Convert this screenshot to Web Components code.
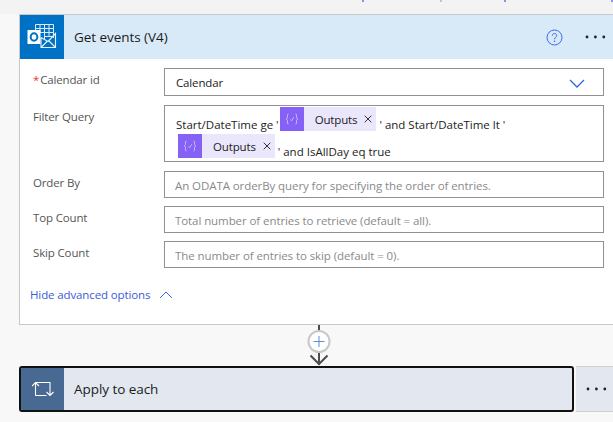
<!DOCTYPE html>
<html><head><meta charset="utf-8"><style>
html,body{margin:0;padding:0;width:613px;height:422px;overflow:hidden;background:#f8f8f8}
body{font-family:"Open Sans","Noto Sans",sans-serif}
</style></head><body>
<flow-canvas>
  <top-strip></top-strip>
  <action-card>
    <field-row label="Calendar id" required kind="select"><span>Calendar</span></field-row>
    <field-row label="Filter Query" kind="tall"><span>Start/DateTime ge '</span><token-chip>Outputs</token-chip><span>' and Start/DateTime lt '</span><token-chip indent>Outputs</token-chip><span>' and IsAllDay eq true</span></field-row>
    <field-row label="Order By" placeholder="An ODATA orderBy query for specifying the order of entries."></field-row>
    <field-row label="Top Count" placeholder="Total number of entries to retrieve (default = all)."></field-row>
    <field-row label="Skip Count" placeholder="The number of entries to skip (default = 0)."></field-row>
  </action-card>
  <flow-connector></flow-connector>
  <loop-bar></loop-bar>
</flow-canvas>
<script>
const F='"Open Sans","Noto Sans",sans-serif';
const dots=`<svg width="24" height="4" viewBox="0 0 24 4"><circle cx="2" cy="2" r="1.4" fill="#222"/><circle cx="10.4" cy="2" r="1.4" fill="#222"/><circle cx="18.8" cy="2" r="1.4" fill="#222"/></svg>`;
customElements.define('flow-canvas',class extends HTMLElement{constructor(){super();this.attachShadow({mode:'open'}).innerHTML=`<style>:host{display:flex;flex-direction:column;width:613px;height:422px;background:#f8f8f8;overflow:hidden}</style><slot></slot>`;}});
customElements.define('top-strip',class extends HTMLElement{constructor(){super();this.attachShadow({mode:'open'}).innerHTML=`<style>:host{display:block;height:14px;background:#f3f3f3}svg{display:block}</style><svg width="613" height="14" viewBox="0 0 613 14"><rect x="362" width="2" height="2" fill="#8f8cf5"/><rect x="440" width="2" height="2" fill="#c4c4c4"/><rect x="504" width="2" height="2" fill="#8f8cf5"/><rect x="611" width="2" height="2" fill="#8f8cf5"/></svg>`;}});
customElements.define('action-card',class extends HTMLElement{constructor(){super();this.attachShadow({mode:'open'}).innerHTML=`<style>
:host{display:block;flex:none;margin-left:19px;width:594px;height:311px;box-sizing:border-box;border:1px solid #c8c8c8;border-right:0;background:#fff;font-family:${F}}
header{display:flex;align-items:center;height:44px;background:#d8e9f8}
.ic{width:44px;height:44px;background:#0072c6;display:flex;align-items:center;justify-content:center}
h2{margin:0 0 0 10px;flex:1;font:400 13.5px/20px ${F};letter-spacing:-.05px;color:#1b1b1b}
.help{margin-right:22px;display:flex}.more{margin-right:4px;display:flex}
.body{display:flex;flex-direction:column;gap:8px;padding:9px 9px 0 0}
.link{display:flex;align-items:center;gap:9px;margin:11px 0 0 10px;color:#3b5bd9;font:400 11.5px/16px ${F};letter-spacing:-.12px}
svg{display:block}
</style><header><div class="ic"><svg width="30" height="30" viewBox="0 0 30 30" fill="none">
<path d="M8.500 9V2.500H26.500V16M8.500 6.500H26.500M8.500 10.500H26.500M17 14.500H26.500M13 2.500V10.500M17.500 2.500V18M22 2.500V15" stroke="#dcebf8" stroke-width="1"/>
<path d="M14 15.500V25.500H28.500V11.500L21 19.500L14 15.500M14 25.500L20 19.500M28.500 25.500L22 19" stroke="#e6f1fa" stroke-width="1.100"/>
<rect x="0.500" y="8" width="13" height="14" fill="#fff"/><ellipse cx="7" cy="15" rx="3.300" ry="3.800" stroke="#0072c6" stroke-width="2"/></svg></div>
<h2>Get events (V4)</h2>
<span class="help"><svg width="17" height="17" viewBox="0 0 17 17" fill="none"><circle cx="8.500" cy="8.500" r="7.500" stroke="#3b68e8" stroke-width="1"/><path d="M6.300 6.700C6.300 5.400 7.300 4.500 8.500 4.500C9.700 4.500 10.700 5.300 10.700 6.500C10.700 8.200 8.500 8.200 8.500 10.300" stroke="#3b68e8"/><circle cx="8.500" cy="12.300" r=".8" fill="#3b68e8"/></svg></span>
<span class="more">${dots}</span></header>
<div class="body"><slot></slot>
<div class="link"><span>Hide advanced options</span><svg width="14" height="8" viewBox="0 0 14 8" fill="none"><path d="M1 7L7 1L13 7" stroke="#3b68e8"/></svg></div></div>`;}});
customElements.define('field-row',class extends HTMLElement{constructor(){super();
const kind=this.getAttribute('kind')||'',req=this.hasAttribute('required'),ph=this.getAttribute('placeholder');
this.attachShadow({mode:'open'}).innerHTML=`<style>
:host{display:grid;grid-template-columns:144px 440px;font-family:${F}}
:host([kind]){margin-bottom:1px}
label{padding:3px 0 0 13px;font:400 11.5px/18px ${F};letter-spacing:-.15px;color:#555}
b{font-weight:400;color:#e33;margin-right:1px}
.box{box-sizing:border-box;border:1px solid #919191;background:#fff;height:27px;display:flex;align-items:center;padding:2px 10px 0;font:400 11.5px/16px ${F};letter-spacing:-.08px;color:#222;justify-content:space-between}
.select{height:28px;padding:2px 18px 0 11px;letter-spacing:-.15px}
.tall{height:57px;display:block;padding:5.500px 10px 0 11px;line-height:0;letter-spacing:0}
.ph{color:#8a8a8a}
svg{display:block}
</style><label>${req?'<b>*</b>':''}${this.getAttribute('label')}</label>
<div class="box ${kind}">${ph?`<span class="ph">${ph}</span>`:'<slot></slot>'}${kind==='select'?'<svg width="16" height="9" viewBox="0 0 16 9" fill="none"><path d="M1 1L8 8L15 1" stroke="#2f66e6" stroke-width="1.300"/></svg>':''}</div>`;}});
customElements.define('token-chip',class extends HTMLElement{constructor(){super();this.attachShadow({mode:'open'}).innerHTML=`<style>
:host{display:inline-flex;align-items:center;height:24px;margin:-4.500px 3px 7.500px 1px;vertical-align:middle;background:#eae6fb;font:400 11.500px/16px ${F};letter-spacing:-.15px;color:#222}
:host([indent]){margin-left:2px}
i{width:24px;height:24px;background:#8661f5;display:flex;align-items:center;justify-content:center;margin-right:11px}
b{font-weight:400;padding-top:2px}
u{text-decoration:none;margin-left:7px;margin-right:4px;display:flex}
</style><i><svg width="14" height="12" viewBox="0 0 14 12" fill="none" stroke="#c9b8fb" stroke-width="1"><path d="M3.500 1C2 1 2.500 2.500 2.500 4C2.500 5 2.200 5.800 1 6C2.200 6.200 2.500 7 2.500 8C2.500 9.500 2 11 3.500 11M10.500 1C12 1 11.500 2.500 11.500 4C11.500 5 11.800 5.800 13 6C11.800 6.200 11.500 7 11.500 8C11.500 9.500 12 11 10.500 11M5.500 6.500L6.500 7.800L8.800 4.200"/></svg></i><b><slot></slot></b><u><svg width="8" height="8" viewBox="0 0 8 8" fill="none"><path d="M.7.700L7.300 7.300M7.300.700L.7 7.300" stroke="#333" stroke-width="1"/></svg></u>`;}});
customElements.define('flow-connector',class extends HTMLElement{constructor(){super();this.attachShadow({mode:'open'}).innerHTML=`<style>:host{display:block;flex:none;height:41px}svg{display:block}</style>
<svg width="613" height="41" viewBox="0 0 613 41" fill="none"><path d="M319 0V40M310.500 30.500L319 39L327.500 30.500" stroke="#4d4d4d" stroke-width="2"/>
<circle cx="319" cy="16.500" r="10.500" fill="#fff" stroke="#c8c8c8" stroke-width="2"/><path d="M319 11V22M313.500 16.500H324.500" stroke="#5a8fd8" stroke-width="1"/></svg>`;}});
customElements.define('loop-bar',class extends HTMLElement{constructor(){super();this.attachShadow({mode:'open'}).innerHTML=`<style>
:host{display:flex;flex:none;margin-left:19px;height:46px;font-family:${F}}
.main{box-sizing:border-box;width:555px;height:46px;border:2px solid #111;border-radius:3px;background:#e3e8f0;display:flex;align-items:center;overflow:hidden}
.ic{width:43px;height:42px;background:#486991;display:flex;align-items:center;justify-content:center;flex:none}
span{margin-left:10px;font:400 13.5px/20px ${F};letter-spacing:-.05px;color:#1b1b1b}
.more{margin-left:2px;flex:1;box-sizing:border-box;height:46px;background:#e3e8f0;border-top:1px solid #d0d0d0;border-bottom:1px solid #d0d0d0;display:flex;align-items:center;padding-left:10px}
svg{display:block}
</style><div class="main"><div class="ic"><svg width="22" height="18" viewBox="0 0 22 18" fill="none"><path d="M3.500 15.500V2.500H18V15.500M3.500 15.500H14.500M0 6L3.500 2.500L7 6M14.500 12L18 15.500L21.500 12" stroke="#fff" stroke-width="1.100"/></svg></div><span>Apply to each</span></div><div class="more">${dots}</div>`;}});
</script></body></html>
